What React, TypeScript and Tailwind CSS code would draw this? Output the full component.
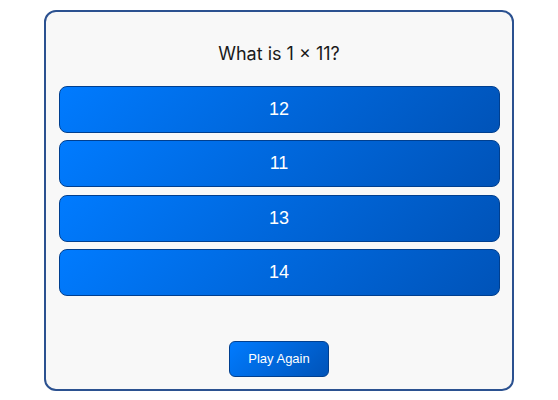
const answers = ["12", "11", "13", "14"];

export default function App() {
  return (
    <div className="w-[558px] h-[400px] bg-white flex items-center justify-center">
      <div className="w-[470px] h-[381px] border-2 border-[#2b5190] rounded-[12px] bg-[#f8f8f8] flex flex-col items-center px-[12px] pt-[28px] pb-[12px]">
        <h1 className="text-[18px] leading-[27px] text-[#1a1a1a] font-['Inter',sans-serif] font-normal">
          What is 1 × 11?
        </h1>
        <div className="mt-[19px] w-[441px] flex flex-col gap-[7.5px]">
          {answers.map((a) => (
            <button
              key={a}
              className="h-[47px] w-full rounded-[8px] border border-[#003f8f] bg-[linear-gradient(135deg,#007bff,#0053b8)] text-white text-[18px] font-['Liberation_Sans',Arial,sans-serif]"
            >
              {a}
            </button>
          ))}
        </div>
        <div className="flex-1" />
        <button className="w-[100px] h-[36px] rounded-[6px] border border-[#003f8f] bg-[linear-gradient(135deg,#007bff,#0053b8)] text-white text-[13px] font-['Liberation_Sans',Arial,sans-serif]">
          Play Again
        </button>
      </div>
    </div>
  );
}
